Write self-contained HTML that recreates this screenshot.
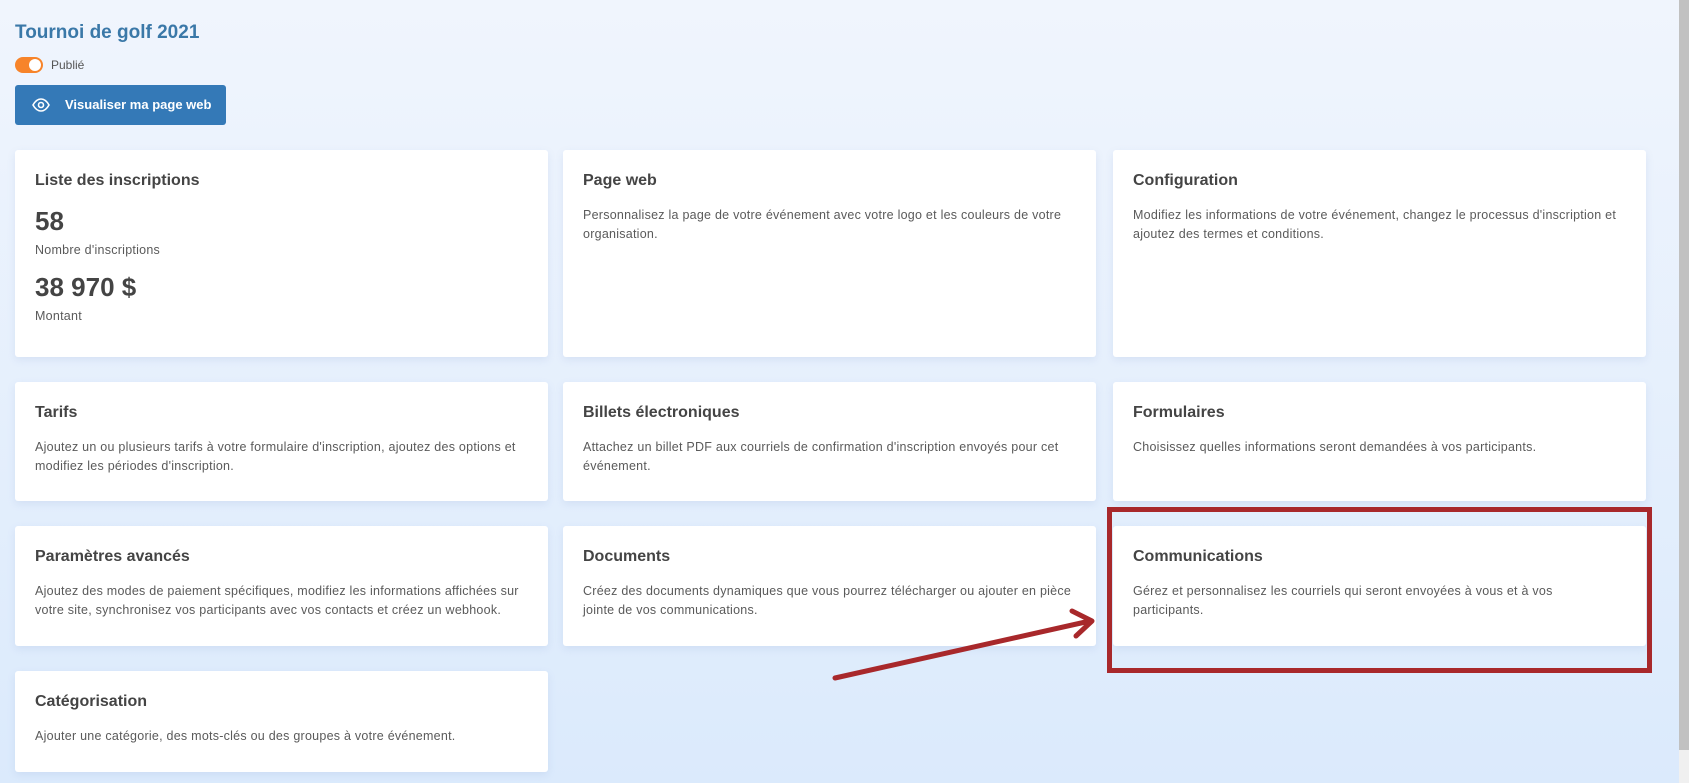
<!DOCTYPE html>
<html><head><meta charset="utf-8"><style>
*{margin:0;padding:0;box-sizing:border-box}
body{width:1689px;height:783px;overflow:hidden;background:linear-gradient(#f0f5fd,#dbeafc);font-family:"Liberation Sans",sans-serif;position:relative}
.title{position:absolute;left:15px;top:22px;font-size:19px;font-weight:bold;color:#3a78a8}
.tog{position:absolute;left:15px;top:57px;width:28px;height:16px;border-radius:8px;background:#f7842a}
.tog:after{content:"";position:absolute;right:2px;top:2px;width:12px;height:12px;border-radius:50%;background:#fff}
.pub{position:absolute;left:51px;top:58px;font-size:12px;color:#555}
.btn{position:absolute;left:15px;top:85px;width:211px;height:40px;background:#3479b7;border-radius:3px;color:#fff;font-size:13px;font-weight:bold;line-height:40px;padding-left:50px}
.btn svg{position:absolute;left:17px;top:13px}
.card{position:absolute;background:#fff;border-radius:3px;box-shadow:0 3px 8px rgba(120,150,200,.15);padding:20px;color:#555}
.card h3{font-size:16px;color:#444;margin-top:2px;margin-bottom:16px}
.card p{font-size:12.5px;line-height:19px;color:#5a5a5a;letter-spacing:.25px}
.big{font-size:26px;font-weight:bold;color:#444}
.c1{left:15px}.c2{left:563px}.c3{left:1113px}
.c1,.c2,.c3{width:533px}
.scroll{position:absolute;right:0;top:0;width:10px;height:750px;background:#c1c1c1}
.scroll2{position:absolute;right:0;top:750px;width:10px;height:33px;background:#f0f0f0}
.box{position:absolute;left:1107px;top:507px;width:545px;height:166px;border:5px solid #a8282b}
</style></head><body>
<div class="title">Tournoi de golf 2021</div>
<div class="tog"></div><div class="pub">Publié</div>
<div class="btn"><svg width="18" height="14" viewBox="0 0 18 14"><path d="M1 7C3.5 2.5 6 1 9 1s5.5 1.5 8 6c-2.5 4.5-5 6-8 6S3.5 11.5 1 7z" fill="none" stroke="#fff" stroke-width="1.6"/><circle cx="9" cy="7" r="2.5" fill="none" stroke="#fff" stroke-width="1.6"/></svg>Visualiser ma page web</div>

<div class="card c1" style="top:150px;height:207px"><h3>Liste des inscriptions</h3>
<div class="big" style="margin-top:12px">58</div><p style="margin-top:4px">Nombre d'inscriptions</p>
<div class="big" style="margin-top:12px">38 970 $</div><p style="margin-top:4px">Montant</p></div>
<div class="card c2" style="top:150px;height:207px"><h3>Page web</h3><p>Personnalisez la page de votre événement avec votre logo et les couleurs de votre organisation.</p></div>
<div class="card c3" style="top:150px;height:207px"><h3>Configuration</h3><p>Modifiez les informations de votre événement, changez le processus d'inscription et ajoutez des termes et conditions.</p></div>

<div class="card c1" style="top:382px;height:119px"><h3>Tarifs</h3><p>Ajoutez un ou plusieurs tarifs à votre formulaire d'inscription, ajoutez des options et modifiez les périodes d'inscription.</p></div>
<div class="card c2" style="top:382px;height:119px"><h3>Billets électroniques</h3><p>Attachez un billet PDF aux courriels de confirmation d'inscription envoyés pour cet événement.</p></div>
<div class="card c3" style="top:382px;height:119px"><h3>Formulaires</h3><p>Choisissez quelles informations seront demandées à vos participants.</p></div>

<div class="card c1" style="top:526px;height:120px"><h3>Paramètres avancés</h3><p>Ajoutez des modes de paiement spécifiques, modifiez les informations affichées sur votre site, synchronisez vos participants avec vos contacts et créez un webhook.</p></div>
<div class="card c2" style="top:526px;height:120px"><h3>Documents</h3><p>Créez des documents dynamiques que vous pourrez télécharger ou ajouter en pièce jointe de vos communications.</p></div>
<div class="card c3" style="top:526px;height:120px"><h3>Communications</h3><p>Gérez et personnalisez les courriels qui seront envoyées à vous et à vos<br>participants.</p></div>

<div class="card c1" style="top:671px;height:101px"><h3>Catégorisation</h3><p>Ajouter une catégorie, des mots-clés ou des groupes à votre événement.</p></div>

<div class="box"></div>
<svg style="position:absolute;left:0;top:0" width="1689" height="783"><path d="M835 678L1090 621M1072 611L1092 621L1076 636" fill="none" stroke="#a8282b" stroke-width="5" stroke-linecap="round" stroke-linejoin="round"/></svg>
<div class="scroll"></div><div class="scroll2"></div>
</body></html>
